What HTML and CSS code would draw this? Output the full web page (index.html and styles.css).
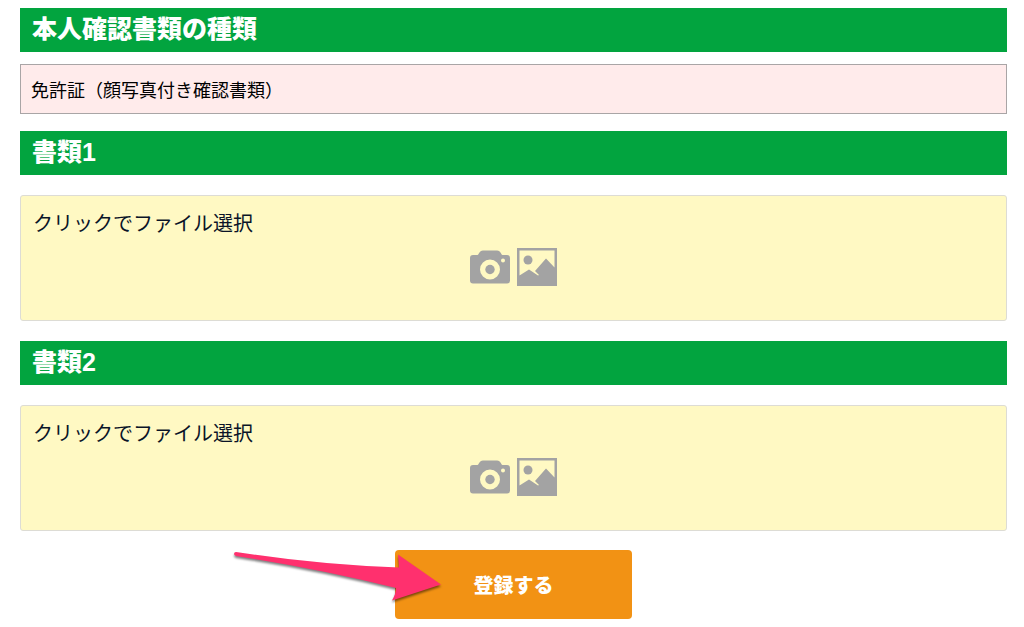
FILE: index.html
```html
<!DOCTYPE html>
<html lang="ja">
<head>
<meta charset="utf-8">
<meta name="viewport" content="width=device-width, initial-scale=1">
<title>本人確認書類</title>
<link rel="stylesheet" href="styles.css">
</head>
<body>
<svg class="symbols" aria-hidden="true">
  <symbol id="camera" viewBox="0 0 40 34">
    <path fill-rule="evenodd" d="M3 5H7.500C9 5 9 0.500 13 0.500H27C31 0.500 31 5 32.500 5H37Q40 5 40 8V30.500Q40 33.500 37 33.500H3Q0 33.500 0 30.500V8Q0 5 3 5ZM20 9.500A10 10 0 1 0 20 29.500A10 10 0 1 0 20 9.500ZM33 8.500A2 2 0 1 0 33 12.500A2 2 0 1 0 33 8.500Z"/>
    <circle cx="20" cy="19.500" r="4.700"/>
  </symbol>
  <symbol id="picture" viewBox="0 0 40 38">
    <path fill-rule="evenodd" d="M0 0H40V38H0ZM2.500 2.500V27.500L12 21.500L21 27.500L22 27L18 23L29 10.500L37.500 19.500V2.500Z"/>
    <circle cx="11" cy="12" r="4.500"/>
  </symbol>
</svg>
<form class="form">
  <h2 class="heading"><label for="kind">本人確認書類の種類</label></h2>
  <select class="kind" id="kind">
    <option>免許証（顔写真付き確認書類）</option>
  </select>

  <h2 class="heading">書類1</h2>
  <label class="drop">
    <span class="drop-text">クリックでファイル選択</span>
    <span class="drop-icons">
      <svg class="camera"><use href="#camera"/></svg>
      <svg class="picture"><use href="#picture"/></svg>
    </span>
    <input class="file" type="file" accept="image/*">
  </label>

  <h2 class="heading">書類2</h2>
  <label class="drop">
    <span class="drop-text">クリックでファイル選択</span>
    <span class="drop-icons">
      <svg class="camera"><use href="#camera"/></svg>
      <svg class="picture"><use href="#picture"/></svg>
    </span>
    <input class="file" type="file" accept="image/*">
  </label>

  <div class="actions">
    <button class="submit" type="submit">登録する</button>
    <svg class="arrow" viewBox="0 0 220 64" aria-hidden="true">
      <path d="M6 6Q4 6 4 8Q4 9 6 10Q90 23 166 42Q166 48 162 54.500L211 38.500L168 8.500L169 21.500Q90 19 6 6Z"/>
    </svg>
  </div>
</form>
</body>
</html>
```
FILE: styles.css
```css
* {
  box-sizing: border-box;
}

body {
  margin: 0;
  background: #fff;
  color: #000;
  font-family: "Noto Sans CJK JP", sans-serif;
}

.symbols {
  display: none;
}

.form {
  display: flex;
  flex-direction: column;
  padding: 8px 17px 8px 20px;
}

.heading {
  margin: 0;
  padding: 0 12px 2px;
  background: #02a43f;
  color: #fff;
  font-family: "Liberation Sans", "Noto Sans CJK JP", sans-serif;
  font-size: 25px;
  font-weight: 900;
  line-height: 42px;
}

.kind {
  appearance: none;
  width: 100%;
  height: 50px;
  margin: 12px 0 17px;
  padding: 0 10px;
  border: 1px solid #a9a5a6;
  border-radius: 0;
  background: #ffebeb;
  color: #000;
  font-family: inherit;
  font-size: 18px;
}

.drop {
  position: relative;
  display: flex;
  flex-direction: column;
  gap: 9px;
  margin: 20px 0;
  padding: 11px 12px 34px;
  border: 1px solid #dddcd5;
  border-radius: 3px;
  background: #fff9c3;
  color: #0a1428;
  cursor: pointer;
}

.drop + .actions {
  margin-top: -1px;
}

.drop-text {
  font-size: 20px;
  line-height: 32px;
}

.drop-icons {
  display: flex;
  justify-content: center;
  align-items: center;
  gap: 7px;
  fill: #a3a3a3;
}

.camera {
  width: 40px;
  height: 34px;
}

.picture {
  width: 40px;
  height: 38px;
}

.file {
  position: absolute;
  inset: 0;
  width: 100%;
  height: 100%;
  opacity: 0;
  cursor: pointer;
}

.actions {
  position: relative;
  display: flex;
  justify-content: center;
}

.submit {
  width: 24%;
  min-width: 160px;
  height: 69px;
  padding: 0;
  border: 0;
  border-radius: 4px;
  background: #f29214;
  color: #fff;
  font-family: inherit;
  font-size: 20px;
  font-weight: 900;
  cursor: pointer;
}

.arrow {
  position: absolute;
  top: -4px;
  right: calc(50% + 64px);
  width: 220px;
  height: 64px;
  overflow: visible;
  fill: #ff306e;
  filter: drop-shadow(0 2px 1px rgba(0, 0, 0, 0.5));
  pointer-events: none;
}
```
